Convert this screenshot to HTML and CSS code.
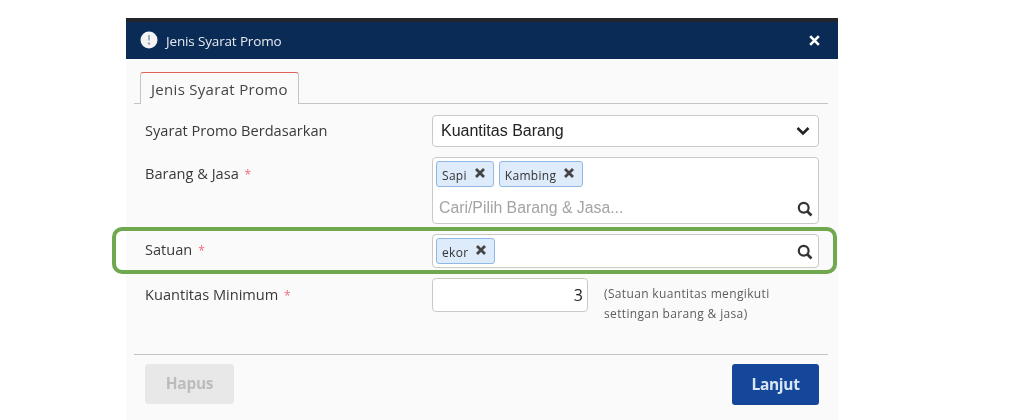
FILE: index.html
```html
<!DOCTYPE html>
<html lang="id">
<head>
<meta charset="utf-8">
<title>Jenis Syarat Promo</title>
<link rel="stylesheet" href="styles.css">
</head>
<body>
<section class="dialog">
  <header class="dialog-head">
    <div class="dialog-title">
      <svg class="info-icon" viewBox="0 0 18 18" aria-hidden="true"><circle cx="9" cy="9" r="8.5" fill="#f4f4f4"/><rect x="8" y="3.8" width="2" height="6" rx="1" fill="#a3abb8"/><circle cx="9" cy="12.6" r="1.3" fill="#a3abb8"/></svg>
      <span>Jenis Syarat Promo</span>
    </div>
    <svg class="close-icon" viewBox="0 0 12 12" aria-hidden="true"><path d="M2 2l8 8M10 2l-8 8" stroke="#fff" stroke-width="2.4" fill="none"/></svg>
  </header>
  <div class="dialog-body">
    <div class="tabs"><div class="tab">Jenis Syarat Promo</div></div>
    <div class="form">
      <div class="row row-select">
        <div class="label">Syarat Promo Berdasarkan</div>
        <div class="field select">
          <span>Kuantitas Barang</span>
          <svg class="chevron" viewBox="0 0 14 10" aria-hidden="true"><path d="M1.5 2l5.5 5.5L12.5 2" stroke="#222" stroke-width="2.6" fill="none"/></svg>
        </div>
      </div>
      <div class="row row-items">
        <div class="label">Barang &amp; Jasa <span class="req">*</span></div>
        <div class="field multi">
          <div class="chips">
            <span class="chip">Sapi <svg class="chip-x" viewBox="0 0 12 12" aria-hidden="true"><path d="M2 2l8 8M10 2l-8 8" stroke="#444" stroke-width="2.8" fill="none"/></svg></span>
            <span class="chip">Kambing <svg class="chip-x" viewBox="0 0 12 12" aria-hidden="true"><path d="M2 2l8 8M10 2l-8 8" stroke="#444" stroke-width="2.8" fill="none"/></svg></span>
          </div>
          <div class="search-line">
            <span class="placeholder">Cari/Pilih Barang &amp; Jasa...</span>
            <svg class="search" viewBox="0 0 16 16" aria-hidden="true"><circle cx="6.7" cy="6.7" r="4.9" stroke="#333" stroke-width="2.2" fill="none"/><path d="M10.2 10.2l4.3 4.3" stroke="#333" stroke-width="2.7"/></svg>
          </div>
        </div>
      </div>
      <div class="row row-unit">
        <div class="highlight"></div>
        <div class="label">Satuan <span class="req">*</span></div>
        <div class="field unit">
          <span class="chip">ekor <svg class="chip-x" viewBox="0 0 12 12" aria-hidden="true"><path d="M2 2l8 8M10 2l-8 8" stroke="#444" stroke-width="2.8" fill="none"/></svg></span>
          <svg class="search" viewBox="0 0 16 16" aria-hidden="true"><circle cx="6.7" cy="6.7" r="4.9" stroke="#333" stroke-width="2.2" fill="none"/><path d="M10.2 10.2l4.3 4.3" stroke="#333" stroke-width="2.7"/></svg>
        </div>
      </div>
      <div class="row row-qty">
        <div class="label">Kuantitas Minimum <span class="req">*</span></div>
        <div class="qty-wrap">
          <div class="field qty">3</div>
          <p class="hint">(Satuan kuantitas mengikuti settingan barang &amp; jasa)</p>
        </div>
      </div>
    </div>
    <footer class="dialog-foot">
      <button class="btn btn-off" type="button">Hapus</button>
      <button class="btn btn-main" type="button">Lanjut</button>
    </footer>
  </div>
</section>
</body>
</html>
```
FILE: styles.css
```css
* { box-sizing: border-box; }
html, body { margin: 0; height: 420px; overflow: hidden; background: #fff; }
body { padding: 18px 0 0 126px; font-family: "Open Sans", "Noto Sans", sans-serif; color: #333; }

.dialog { width: 712px; height: 402px; background: #fafafa; filter: blur(0.35px); }

.dialog-head {
  height: 41px;
  padding: 0 16px 0 14px;
  background: #0b2b57;
  border-top: 4px solid #22252b;
  display: flex;
  align-items: center;
  justify-content: space-between;
}
.dialog-title { display: flex; align-items: center; gap: 8px; color: #e6e9ee; font-size: 13.5px; letter-spacing: -0.15px; }
.info-icon { width: 18px; height: 18px; margin-top: -2px; }
.close-icon { width: 13px; height: 13px; margin-right: 1px; }

.dialog-body { padding: 13px 10px 0 8px; }

.tabs { height: 32px; padding-left: 6px; border-bottom: 1px solid #c4c4c4; }
.tab {
  width: 159px;
  height: 32px;
  padding-left: 10px;
  background: #fafafa;
  border: 1px solid #c4c4c4;
  border-top: 1px solid #e0605a;
  border-bottom: 0;
  border-radius: 3px 3px 0 0;
  font-size: 15px;
  line-height: 33px;
  letter-spacing: 0.3px;
  color: #444;
}

.form { height: 250px; padding: 11px 0 0 11px; }
.row { position: relative; display: flex; }
.label { flex: 0 0 287px; font-size: 14.6px; line-height: 20px; color: #3a3a3a; }
.req { color: #ee6a7a; font-size: 12px; line-height: 1; margin-left: 2px; }
.row-select { height: 42px; }
.row-select .label { padding-top: 5px; }
.row-items { height: 77px; }
.row-items .label { padding-top: 6px; }
.row-unit { height: 44px; }
.row-unit .label { padding-top: 5px; }
.row-qty .label { padding-top: 6px; }

.field { background: #fff; border: 1px solid #c9c9c9; border-radius: 4px; flex: 0 0 387px; }
.select {
  height: 32px;
  padding: 0 8px 0 8px;
  display: flex;
  align-items: center;
  justify-content: space-between;
  font: 16px "Liberation Sans", sans-serif;
  color: #222;
}
.chevron { width: 14px; height: 10px; }

.multi { height: 67px; padding: 3px 4px 0 3px; }
.chips { display: flex; gap: 5px; }
.chip {
  height: 26px;
  padding: 2px 7px 0 5px;
  display: inline-flex;
  align-items: center;
  gap: 7px;
  background: #deebfa;
  border: 1px solid #8fb8e6;
  border-radius: 3px;
  font-size: 12px;
  letter-spacing: 0.3px;
  color: #333;
}
.chip-x { width: 12px; height: 12px; margin-top: -5px; }
.search-line { height: 34px; margin-top: 4px; padding: 0 0 0 3px; display: flex; align-items: center; justify-content: space-between; }
.placeholder { font: 15.8px "Liberation Sans", sans-serif; color: #a4a4a4; }
.search { width: 16px; height: 16px; flex: none; margin-right: 1px; margin-top: 1px; }

.unit { height: 34px; padding: 0 4px 0 3px; display: flex; align-items: center; justify-content: space-between; }

.highlight {
  position: absolute;
  left: -33px;
  top: -7px;
  width: 725px;
  height: 47px;
  border: 4px solid #6fa84f;
  border-radius: 10px;
  pointer-events: none;
}

.qty-wrap { display: flex; gap: 16px; }
.qty { flex: 0 0 156px; height: 34px; padding: 0 4px 0 0; text-align: right; font-size: 16px; line-height: 32px; color: #222; }
.hint { margin: 6px 0 0; width: 190px; font-size: 12px; line-height: 20px; letter-spacing: 0.35px; color: #5c5c5c; }

.dialog-foot {
  height: 51px;
  padding: 9px 9px 0 11px;
  border-top: 1px solid #c4c4c4;
  display: flex;
  justify-content: space-between;
}
.btn { height: 41px; padding: 0 0 2px; border: 0; border-radius: 3px; font: 700 15.5px "Open Sans", sans-serif; letter-spacing: -0.3px; }
.btn-off { width: 89px; height: 40px; background: #e8e8e8; color: #bcbcbc; }
.btn-main { width: 87px; background: #14479a; color: #dbe6f5; }
```
